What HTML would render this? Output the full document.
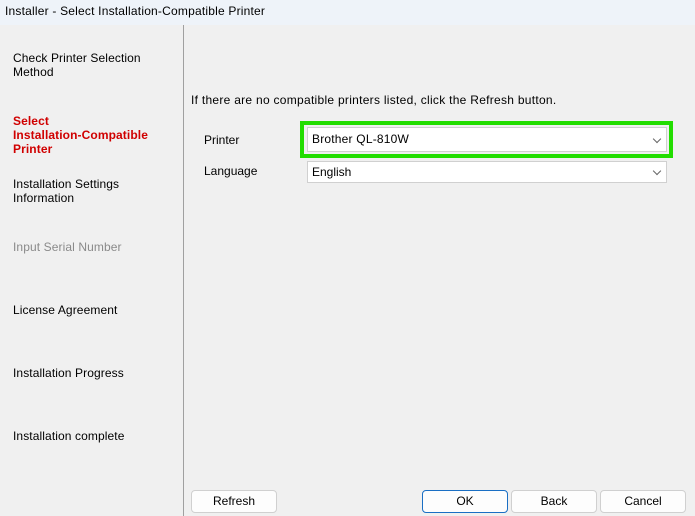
<!DOCTYPE html>
<html><head><style>
body{margin:0;width:695px;height:516px;background:#f0f0f0;font-family:"Liberation Sans",sans-serif;font-size:12px;color:#000;position:relative;overflow:hidden}
.a{position:absolute;white-space:nowrap}
.title{left:0;top:0;width:695px;height:25px;background:#eef3f9}
.div{left:183px;top:25px;width:1px;height:491px;background:#a0a0a0}
.side{left:13px;line-height:14px;letter-spacing:0.1px}
.sel{background:#fff;border:1px solid #d0d0d0;box-sizing:border-box;height:22px;line-height:20px;padding-left:4px}
.chev{position:absolute;right:6px;top:6px;width:5px;height:5px;border-right:1px solid #666;border-bottom:1px solid #666;transform:rotate(45deg)}
.btn{background:#fdfdfd;border:1px solid #d0d0d0;border-radius:4px;box-sizing:border-box;height:23px;line-height:21px;text-align:center;width:86px}
</style></head><body>
<div class="a title"></div>
<div class="a" style="left:5px;top:4px;letter-spacing:0.2px">Installer - Select Installation-Compatible Printer</div>
<div class="a div"></div>
<div class="a side" style="top:51px">Check Printer Selection<br>Method</div>
<div class="a side" style="top:114px;color:#d00000;font-weight:bold">Select<br>Installation-Compatible<br>Printer</div>
<div class="a side" style="top:177px">Installation Settings<br>Information</div>
<div class="a side" style="top:240px;color:#8a8a8a">Input Serial Number</div>
<div class="a side" style="top:303px">License Agreement</div>
<div class="a side" style="top:366px">Installation Progress</div>
<div class="a side" style="top:429px">Installation complete</div>
<div class="a" style="left:191px;top:93px;letter-spacing:0.28px">If there are no compatible printers listed, click the Refresh button.</div>
<div class="a" style="left:204px;top:133px">Printer</div>
<div class="a" style="left:204px;top:164px">Language</div>
<div class="a" style="left:300px;top:121px;width:373px;height:37px;border:4px solid #22dd00;box-sizing:border-box"></div>
<div class="a sel" style="left:307px;top:127px;width:360px;height:25px;line-height:23px;letter-spacing:0.2px">Brother QL-810W<span class="chev" style="top:8px"></span></div>
<div class="a sel" style="left:307px;top:161px;width:360px">English<span class="chev"></span></div>
<div class="a btn" style="left:191px;top:490px">Refresh</div>
<div class="a btn" style="left:422px;top:490px;border-color:#1a6fc4">OK</div>
<div class="a btn" style="left:511px;top:490px">Back</div>
<div class="a btn" style="left:600px;top:490px">Cancel</div>
</body></html>
